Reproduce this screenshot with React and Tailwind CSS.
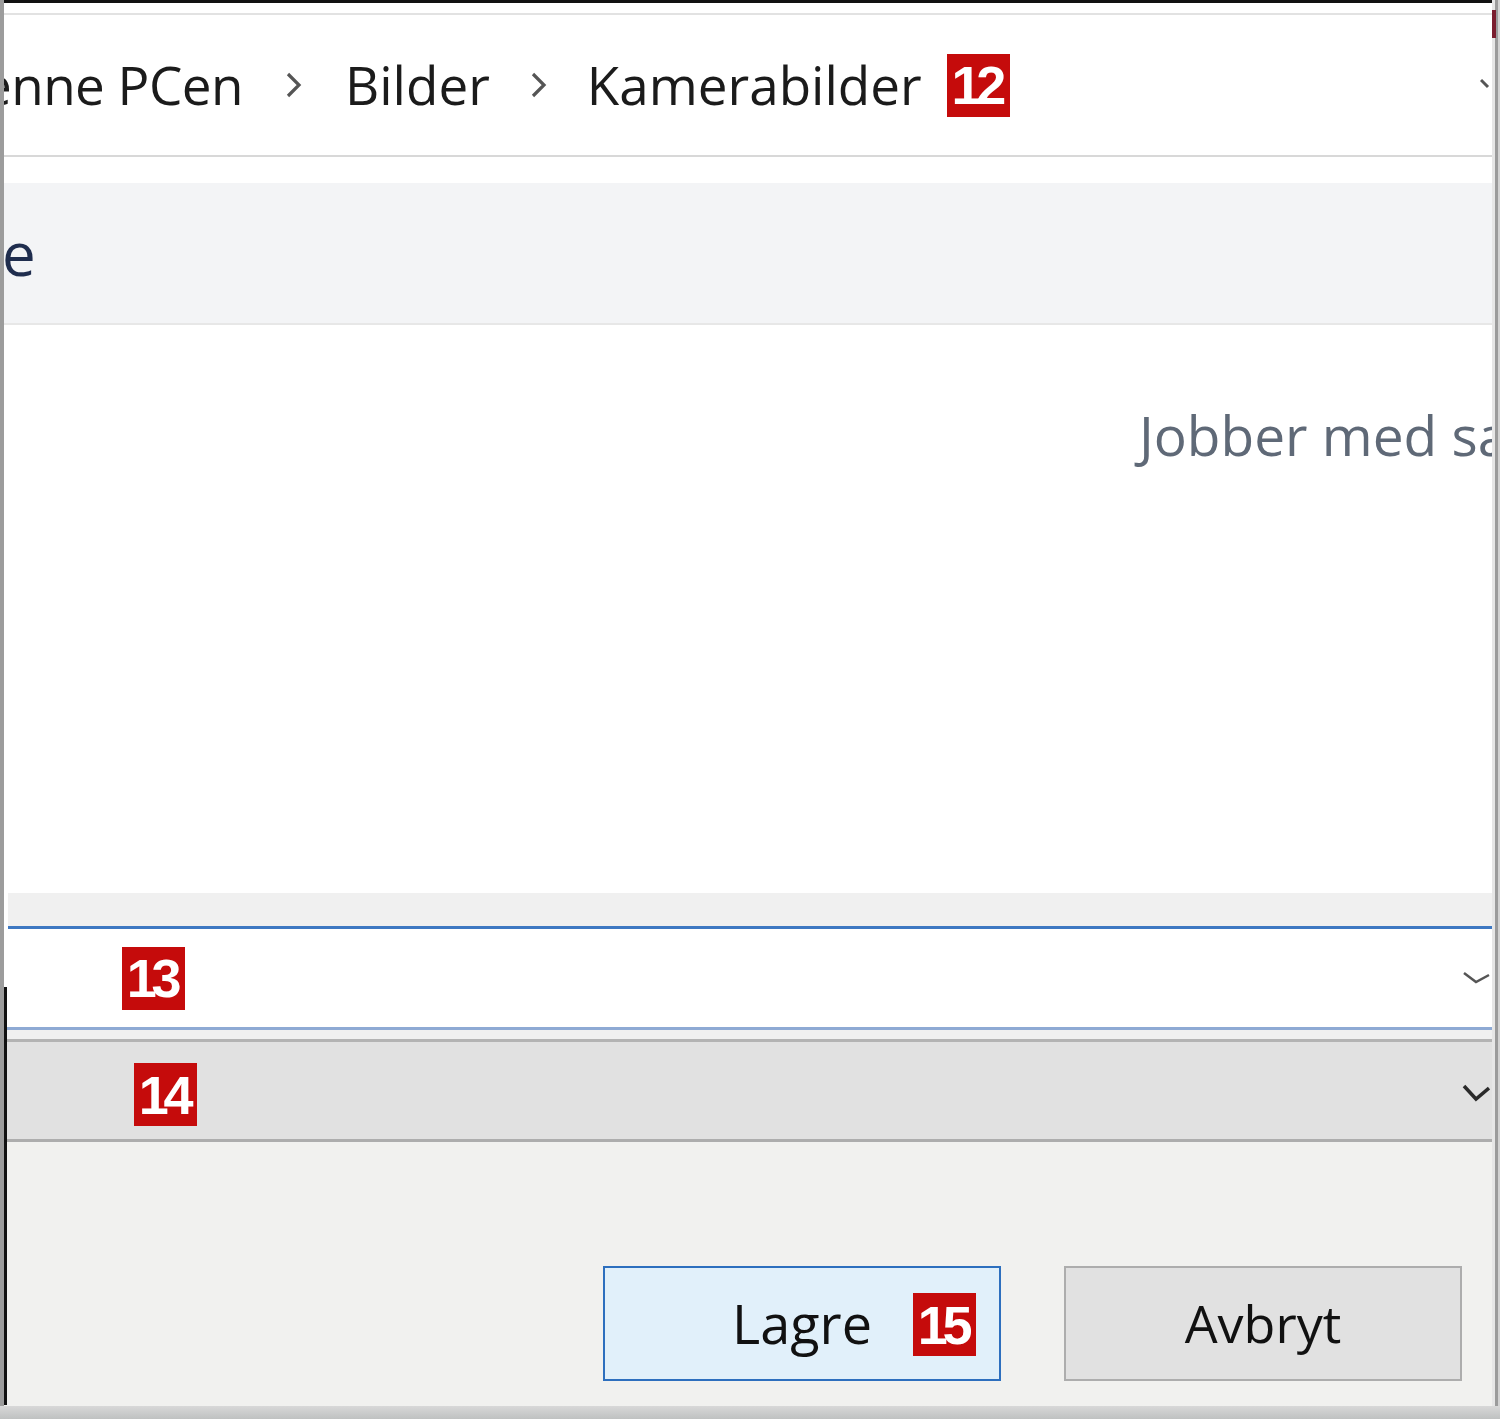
import React from "react";

function Badge({ n, className = "" }) {
  return (
    <span
      className={
        "inline-flex items-center justify-center w-[63px] h-[63px] bg-[#c50b0b] text-white font-bold text-[54px] leading-none tracking-[-0.1em] font-['Liberation_Sans',Arial,sans-serif] " +
        className
      }
    >
      <span className="-ml-[4px]">{n}</span>
    </span>
  );
}

function Crumb() {
  return (
    <svg width="18" height="28" viewBox="0 0 18 28" className="shrink-0">
      <path d="M3 3 L14 14 L3 25" fill="none" stroke="#555" strokeWidth="3.2" />
    </svg>
  );
}

function Chevron({ thick = false }) {
  return (
    <svg width="28" height="22" viewBox="0 0 28 22" className="shrink-0">
      <path
        d={thick ? "M2 4 L14 17 L27 6" : "M2 6 L14 15 L27 8"}
        fill="none"
        stroke={thick ? "#2a2a2a" : "#555"}
        strokeWidth={thick ? 3.5 : 2.5}
      />
    </svg>
  );
}

export default function App() {
  return (
    <div className="relative w-[1500px] h-[1419px] overflow-hidden bg-white font-['Open_Sans','Noto_Sans',sans-serif] flex flex-col">
      <div className="flex flex-1 min-h-0">
        {/* left window edge */}
        <div className="w-[4px] bg-[#9c9c9c] shrink-0" />
        {/* main dialog */}
        <div className="flex-1 flex flex-col min-w-0">
          <div className="h-[3px] bg-[#111] shrink-0" />
          <div className="h-[10px] bg-white shrink-0" />
          <div className="h-[2px] bg-[#e2e2e2] shrink-0" />
          {/* breadcrumb */}
          <div className="h-[140px] shrink-0 flex items-center overflow-hidden whitespace-nowrap text-[53px] text-[#1b1b1b] relative">
            <span className="-ml-[60px] tracking-[-0.01em]">Denne PCen</span>
            <span className="ml-[42px] mr-[42px] flex items-center"><Crumb /></span>
            <span>Bilder</span>
            <span className="ml-[40px] mr-[39px] flex items-center"><Crumb /></span>
            <span>Kamerabilder</span>
            <Badge n="12" className="ml-[25px]" />
            <div className="ml-auto mr-[2px] flex items-center">
              <svg width="10" height="14" viewBox="0 0 10 14">
                <path d="M1 2 L8 9" stroke="#555" strokeWidth="3" />
              </svg>
            </div>
          </div>
          <div className="h-[2px] bg-[#d8d8d8] shrink-0" />
          <div className="h-[26px] bg-white shrink-0" />
          {/* toolbar */}
          <div className="h-[140px] shrink-0 bg-[#f3f4f6] flex items-center overflow-hidden whitespace-nowrap">
            <span className="text-[60px] text-[#1f2d4e] -ml-[2px] leading-none">e</span>
          </div>
          <div className="h-[2px] bg-[#e7e7e7] shrink-0" />
          {/* list */}
          <div className="h-[568px] shrink-0 bg-white overflow-hidden whitespace-nowrap">
            <div className="pl-[1135px] pt-[82px] text-[55px] text-[#5f6977] leading-none">
              Jobber med samme mappe
            </div>
          </div>
          {/* file name */}
          <div className="h-[33px] shrink-0 bg-[#f0f0f0] ml-[4px]" />
          <div className="h-[3px] shrink-0 bg-[#3e78c2] ml-[4px]" />
          <div className="h-[98px] shrink-0 bg-white ml-[4px] flex items-center pl-[114px] pr-[2px]">
            <Badge n="13" />
            <div className="ml-auto flex items-center"><Chevron /></div>
          </div>
          <div className="h-[3px] shrink-0 bg-[#8eaad4] ml-[2px]" />
          <div className="h-[9px] shrink-0 bg-[#f0f0f0]" />
          <div className="h-[3px] shrink-0 bg-[#b3b3b3]" />
          {/* save as type */}
          <div className="h-[97px] shrink-0 bg-[#e1e1e1] flex items-center pl-[130px] pr-[2px] pt-[8px]">
            <Badge n="14" />
            <div className="ml-auto flex items-center -mt-[4px]"><Chevron thick /></div>
          </div>
          <div className="h-[3px] shrink-0 bg-[#adadad]" />
          {/* footer */}
          <div className="flex-1 bg-[#f1f1ef] flex justify-end items-start pt-[124px] pr-[30px] gap-[63px]">
            <div className="relative w-[398px] h-[115px] bg-[#e1f0fa] border-2 border-[#2d6fbe] flex items-center justify-center">
              <span className="text-[54px] text-[#111] leading-none -mt-[2px]">Lagre</span>
              <Badge n="15" className="absolute left-[308px] top-[25px]" />
            </div>
            <div className="w-[398px] h-[115px] bg-[#e1e1e1] border-2 border-[#adadad] flex items-center justify-center">
              <span className="text-[52px] text-[#111] leading-none -mt-[2px]">Avbryt</span>
            </div>
          </div>
        </div>
        {/* right window edge */}
        <div className="w-[8px] shrink-0 flex">
          <div className="w-[3px] bg-[#e6e6e6]" />
          <div className="w-[3px] bg-[#9b9b9b]" />
          <div className="w-[2px] bg-[#d2d2d2]" />
        </div>
      </div>
      {/* bottom shadow */}
      <div className="h-[13px] shrink-0 bg-gradient-to-b from-[#d8d8d8] to-[#bfc1c1]" />
      {/* overlay details */}
      <div className="absolute left-[4px] top-[987px] w-[3px] h-[418px] bg-[#111]" />
      <div className="absolute left-[1492px] top-[10px] w-[4px] h-[28px] bg-[#7a1d2e]" />
    </div>
  );
}
